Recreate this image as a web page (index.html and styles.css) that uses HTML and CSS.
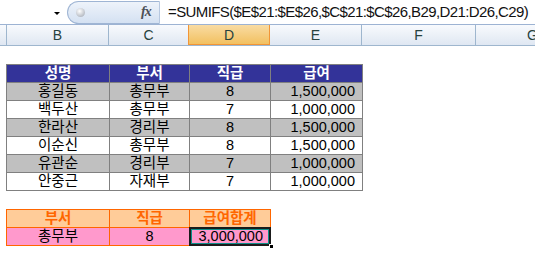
FILE: index.html
```html
<!DOCTYPE html>
<html lang="ko">
<head>
<meta charset="utf-8">
<link rel="stylesheet" href="styles.css">
</head>
<body>
<div class="formula-bar">
  <div class="name-box"><span class="dd-arrow"></span></div>
  <div class="fx-pill"><span class="pill-dot"></span><span class="fx">fx</span></div>
  <div class="formula">=SUMIFS($E$21:$E$26,$C$21:$C$26,B29,D21:D26,C29)</div>
</div>
<div class="col-headers">
  <div class="ch ch-row"></div>
  <div class="ch w-b">B</div>
  <div class="ch w-c">C</div>
  <div class="ch w-d sel">D</div>
  <div class="ch w-e">E</div>
  <div class="ch w-f">F</div>
  <div class="ch w-g">G</div>
</div>
<div class="sheet">
  <div class="grid main">
    <div class="c hd">성명</div><div class="c hd">부서</div><div class="c hd">직급</div><div class="c hd">급여</div>
    <div class="c g">홍길동</div><div class="c g">총무부</div><div class="c g">8</div><div class="c g num">1,500,000</div>
    <div class="c">백두산</div><div class="c">총무부</div><div class="c">7</div><div class="c num">1,000,000</div>
    <div class="c g">한라산</div><div class="c g">경리부</div><div class="c g">8</div><div class="c g num">1,500,000</div>
    <div class="c">이순신</div><div class="c">총무부</div><div class="c">8</div><div class="c num">1,500,000</div>
    <div class="c g">유관순</div><div class="c g">경리부</div><div class="c g">7</div><div class="c g num">1,000,000</div>
    <div class="c">안중근</div><div class="c">자재부</div><div class="c">7</div><div class="c num">1,000,000</div>
  </div>
  <div class="grid crit">
    <div class="c oh">부서</div><div class="c oh">직급</div><div class="c oh">급여합계</div>
    <div class="c pk">총무부</div><div class="c pk">8</div><div class="c pk num active">3,000,000<span class="fill-handle"></span></div>
  </div>
</div>
</body>
</html>
```
FILE: styles.css
```css
* { box-sizing: border-box; }
html, body { margin: 0; padding: 0; background: #fff; }
body { width: 535px; height: 253px; overflow: hidden; font-family: "Liberation Sans", "Noto Sans CJK KR", sans-serif; }

.formula-bar {
  display: flex;
  height: 25px;
  border-bottom: 1px solid #9db3d3;
  background: #fff;
}
.name-box {
  flex: none;
  width: 67px;
  position: relative;
}
.dd-arrow {
  position: absolute;
  left: 54px; top: 12px;
  width: 0; height: 0;
  border-left: 3px solid transparent;
  border-right: 3px solid transparent;
  border-top: 3px solid #000;
}
.fx-pill {
  flex: none;
  width: 93px;
  margin-top: 1px;
  height: 23px;
  border-radius: 12px 0 0 12px;
  border: 1px solid #9fb5d4;
  border-right: 1px solid #b7c8e0;
  background: linear-gradient(#eef3fa, #d4e1f2);
  position: relative;
}
.pill-dot {
  position: absolute;
  left: 8px; top: 6px;
  width: 9px; height: 9px;
  border-radius: 50%;
  background: radial-gradient(circle at 40% 35%, #ffffff, #b9bec6 70%, #9ea4ad);
}
.fx {
  position: absolute;
  left: 73px; top: 2px;
  font-family: "Liberation Serif", serif;
  font-style: italic;
  font-weight: bold;
  font-size: 14px;
  color: #4b4f55;
  letter-spacing: -1px;
}
.formula {
  flex: 1;
  min-width: 0;
  padding-left: 8px;
  font-family: "Liberation Sans", sans-serif;
  font-size: 15px;
  letter-spacing: -0.6px;
  line-height: 24px;
  color: #111;
  white-space: nowrap;
  overflow: hidden;
}

.col-headers {
  display: flex;
  width: 535px;
  overflow: hidden;
  height: 21px;
  border-bottom: 1px solid #9eb6ce;
}
.ch {
  flex: none;
  border-right: 1px solid #9eb6ce;
  background: linear-gradient(#f8fafd, #dfe7f2);
  font-family: "Liberation Sans", sans-serif;
  font-size: 14px;
  color: #27413e;
  text-align: center;
  line-height: 20px;
}
.ch.sel {
  background: linear-gradient(#f9dca3, #f2c060);
  border-right-color: #f29536;
  border-left: 1px solid #f29536;
  border-bottom: 1px solid #f29536;
  margin-left: -1px;
}
.ch-row { width: 7px; }
.w-b { width: 102px; }
.w-c { width: 80px; }
.w-d { width: 82px; }
.w-e { width: 92px; }
.w-f { width: 114px; }
.w-g { width: 114px; }

.sheet {
  padding-top: 18px;
  padding-left: 6px;
}
.grid {
  display: grid;
  gap: 1px;
  width: max-content;
}
.main {
  grid-template-columns: 102px 79px 80px 91px;
  grid-auto-rows: 17px;
  background: #808080;
  border: 1px solid #808080;
}
.crit {
  margin-top: 18px;
  grid-template-columns: 102px 79px 80px;
  grid-auto-rows: 17px;
  background: #ff6600;
  border: 1px solid #ff6600;
}
.c {
  background: #fff;
  text-align: center;
  font-size: 14.5px;
  line-height: 17px;
  height: 17px;
  overflow: hidden;
  color: #000;
  white-space: nowrap;
}
.c.num { text-align: right; padding-right: 7px; }
.c.g { background: #c0c0c0; }
.c.hd { background: #333399; color: #fff; font-weight: bold; }
.c.oh { background: #ffcc99; color: #ff6600; font-weight: bold; }
.c.pk { background: #ff99cc; }
.c.active {
  position: relative;
  overflow: visible;
  outline: 2px solid #1b1b1b;
  outline-offset: -1px;
  box-shadow: inset 0 0 0 2px #0e8f8a;
}
.fill-handle {
  position: absolute;
  right: -4px; bottom: -4px;
  width: 5px; height: 5px;
  background: #000;
  border: 1px solid #fff;
}
```
